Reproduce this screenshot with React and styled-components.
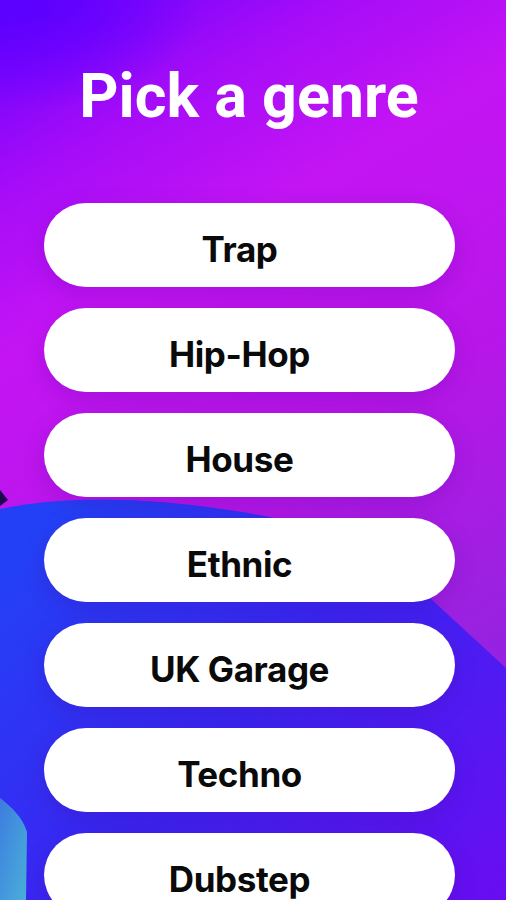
import React from "react";
import styled, { createGlobalStyle } from "styled-components";

const Global = createGlobalStyle`
  html, body {
    margin: 0;
    padding: 0;
    background: #7a10f0;
  }
  * {
    box-sizing: border-box;
  }
`;

const Screen = styled.div`
  position: relative;
  width: 506px;
  height: 900px;
  overflow: hidden;
  background: linear-gradient(150deg, #6400ff 0%, #a50cf8 16%, #c414f4 30%, #b816e8 52%, #9a22e0 75%, #8a20e8 100%);
`;

const Backdrop = styled.svg`
  position: absolute;
  inset: 0;
  width: 100%;
  height: 100%;
  z-index: 0;
`;

const Content = styled.div`
  position: relative;
  z-index: 1;
  display: flex;
  flex-direction: column;
  align-items: flex-start;
  padding: 60px 0 0 44px;
`;

const Title = styled.h1`
  align-self: stretch;
  margin: 0 44px 71px 0;
  text-align: center;
  font-family: Roboto, "Liberation Sans", sans-serif;
  font-weight: 700;
  font-size: 61px;
  line-height: 72px;
  color: #fff;
  letter-spacing: 0;
  transform: translateX(-4px);
`;

const List = styled.div`
  display: flex;
  flex-direction: column;
  gap: 21px;
  width: 411px;
`;

const GenreButton = styled.button`
  height: 84px;
  border: none;
  border-radius: 42px;
  background: #fff;
  box-shadow: 0 6px 22px rgba(70, 0, 140, 0.22);
  font-family: Inter, "Liberation Sans", sans-serif;
  font-weight: 700;
  font-size: 35px;
  color: #0a0a0a;
  letter-spacing: -0.4px;
  padding: 8px 20px 0 0;
  cursor: pointer;
`;

const genres = ["Trap", "Hip-Hop", "House", "Ethnic", "UK Garage", "Techno", "Dubstep"];

function Background() {
    return (
        <Backdrop viewBox="0 0 506 900" preserveAspectRatio="none">
            <defs>
                <linearGradient id="blob" x1="0" y1="0.2" x2="1" y2="1">
                    <stop offset="0" stopColor="#2440f6" />
                    <stop offset="0.45" stopColor="#3a26f2" />
                    <stop offset="1" stopColor="#6a0cf2" />
                </linearGradient>
                <linearGradient id="teal" x1="0" y1="0" x2="1" y2="1">
                    <stop offset="0" stopColor="#3c7ce0" />
                    <stop offset="1" stopColor="#4ab0d8" />
                </linearGradient>
                <radialGradient id="glow" cx="0.05" cy="0.02" r="0.35">
                    <stop offset="0" stopColor="#5a00ff" stopOpacity="0.9" />
                    <stop offset="1" stopColor="#5a00ff" stopOpacity="0" />
                </radialGradient>
            </defs>
            <rect x="0" y="0" width="506" height="300" fill="url(#glow)" />
            <path d="M0 490 L8 500 L0 506 Z" fill="#1a0850" />
            <path d="M0 509 C60 496 150 494 270 517 C340 540 390 560 430 598 L506 668 L506 900 L0 900 Z" fill="url(#blob)" />
            <path d="M0 798 C10 806 22 816 27 832 L26 900 L0 900 Z" fill="url(#teal)" />
        </Backdrop>
    );
}

function App() {
    return (
        <>
            <Global />
            <Screen>
                <Background />
                <Content>
                    <Title>Pick a genre</Title>
                    <List>
                        {genres.map((g) => (
                            <GenreButton key={g}>{g}</GenreButton>
                        ))}
                    </List>
                </Content>
            </Screen>
        </>
    );
}

export default App;
